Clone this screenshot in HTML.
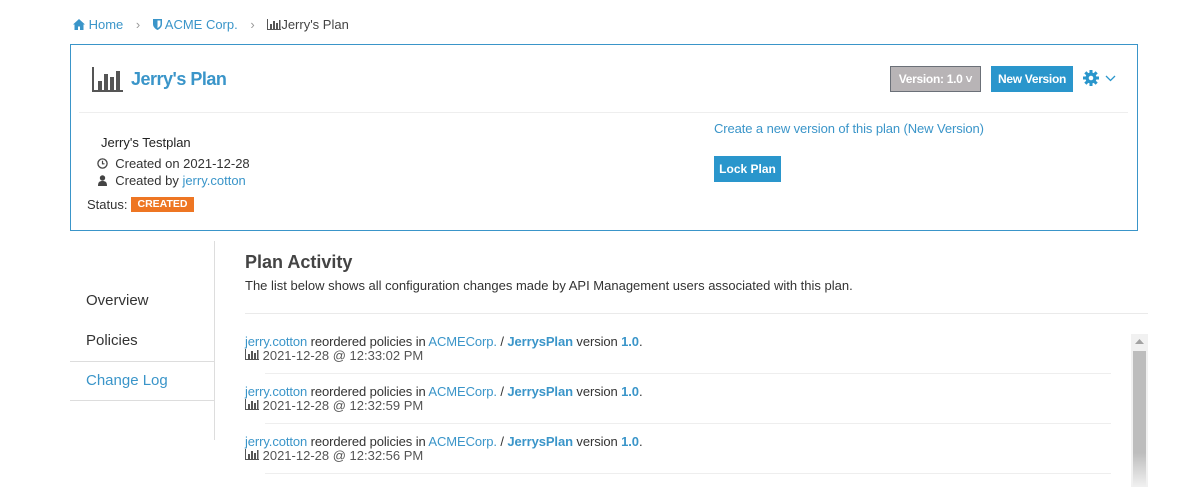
<!DOCTYPE html>
<html><head><meta charset="utf-8"><style>
*{box-sizing:border-box;margin:0;padding:0}
body{width:1183px;height:487px;overflow:hidden;background:#fff;font-family:"Liberation Sans",sans-serif;font-size:13px;color:#333;position:relative}
.a{position:absolute;white-space:nowrap}
.blue{color:#3a95c9}
.btn{position:absolute;color:#fff;font-weight:bold;font-size:12px;text-align:center}
.hr{position:absolute;height:1px;background:#e6e6e6}
</style></head><body>
<div class="a blue" style="left:73px;top:17px">
<svg width="12" height="11" viewBox="0 0 12 11" style="vertical-align:-1px"><path d="M6 0L0 5.5h1.5V11h3.5V7.5h2V11h3.5V5.5H12z" fill="#3a95c9"/></svg> Home
<span style="color:#999;margin:0 9px">›</span>
<svg width="9" height="11" viewBox="0 0 9 11" style="vertical-align:-1px"><path d="M0 0h9v5c0 3-2.5 5-4.5 6C2.5 10 0 8 0 5z" fill="#3a95c9"/><path d="M4.5 1.5h3v3.5c0 2-1.5 3.3-3 4z" fill="#fff"/></svg> ACME Corp.
<span style="color:#999;margin:0 9px">›</span>
<span style="color:#444"><svg width="14" height="11" viewBox="0 0 14 11" style="vertical-align:-1px"><path d="M0.5 0v10.5H14" stroke="#555" fill="none"/><rect x="3" y="5" width="2" height="5" fill="#555"/><rect x="6" y="2" width="2" height="8" fill="#555"/><rect x="9" y="4" width="2" height="6" fill="#555"/><rect x="12" y="1" width="1.5" height="9" fill="#555"/></svg>Jerry's Plan</span></div>

<div class="a" style="left:70px;top:44px;width:1068px;height:187px;border:1px solid #3a95c9"></div>
<svg class="a" style="left:92px;top:67px" width="31" height="25" viewBox="0 0 31 25"><path d="M1 0v24h30" stroke="#555" stroke-width="2" fill="none"/><rect x="6" y="14" width="4" height="9" fill="#555"/><rect x="12" y="7" width="4" height="16" fill="#555"/><rect x="18" y="10" width="4" height="13" fill="#555"/><rect x="24" y="4" width="4" height="19" fill="#555"/></svg>
<div class="a blue" style="left:131px;top:69px;font-size:18px;font-weight:bold;letter-spacing:-0.5px">Jerry's Plan</div>
<div class="btn" style="left:890px;top:66px;width:91px;height:26px;background:#b8b4b6;border:1px solid #6b7078;line-height:24px;letter-spacing:-0.3px">Version: 1.0 ˅</div>
<div class="btn" style="left:991px;top:66px;width:82px;height:26px;background:#2a96cc;line-height:26px;letter-spacing:-0.3px">New Version</div>
<svg class="a" style="left:1083px;top:70px" width="16" height="16" viewBox="0 0 16 16"><g fill="#2a96cc"><circle cx="8" cy="8" r="5.5"/><rect x="6.5" y="0" width="3" height="16"/><rect x="0" y="6.5" width="16" height="3"/><rect x="6.5" y="0" width="3" height="16" transform="rotate(45 8 8)"/><rect x="6.5" y="0" width="3" height="16" transform="rotate(-45 8 8)"/></g><circle cx="8" cy="8" r="2.3" fill="#fff"/></svg>
<svg class="a" style="left:1105px;top:75px" width="11" height="7" viewBox="0 0 11 7"><path d="M1 1l4.5 4.5L10 1" stroke="#2a96cc" stroke-width="1.3" fill="none"/></svg>
<div class="hr" style="left:79px;top:112px;width:1049px;background:#eee"></div>

<div class="a" style="left:101px;top:135px;color:#222">Jerry's Testplan</div>
<div class="a" style="left:97px;top:156px"><svg width="11" height="11" viewBox="0 0 11 11" style="vertical-align:-1px"><circle cx="5.5" cy="5.5" r="4.6" stroke="#444" stroke-width="1.3" fill="none"/><path d="M5.5 2.8v3h2" stroke="#444" stroke-width="1.2" fill="none"/></svg>&nbsp; Created on 2021-12-28</div>
<div class="a" style="left:97px;top:173px"><svg width="11" height="11" viewBox="0 0 11 11" style="vertical-align:-1px"><circle cx="5.5" cy="3" r="2.7" fill="#444"/><path d="M1 11c0-4 1.5-5 4.5-5s4.5 1 4.5 5z" fill="#444"/></svg>&nbsp; Created by <span class="blue">jerry.cotton</span></div>
<div class="a" style="left:87px;top:197px">Status:</div>
<div class="a" style="left:131px;top:197px;width:63px;height:15px;background:#ee7623;color:#fff;font-size:10.5px;font-weight:bold;text-align:center;line-height:15px">CREATED</div>

<div class="a blue" style="left:714px;top:121px;letter-spacing:-0.1px">Create a new version of this plan (New Version)</div>
<div class="btn" style="left:714px;top:156px;width:67px;height:26px;background:#2a96cc;line-height:26px">Lock Plan</div>

<div class="a" style="left:214px;top:241px;width:1px;height:199px;background:#ddd"></div>
<div class="a" style="left:86px;top:292px;font-size:15px;color:#333">Overview</div>
<div class="a" style="left:86px;top:332px;font-size:15px;color:#333">Policies</div>
<div class="hr" style="left:70px;top:361px;width:145px;background:#ddd"></div>
<div class="a blue" style="left:86px;top:372px;font-size:15px">Change Log</div>
<div class="hr" style="left:70px;top:400px;width:145px;background:#ddd"></div>

<div class="a" style="left:245px;top:252px;font-size:18px;font-weight:bold;color:#444">Plan Activity</div>
<div class="a" style="left:245px;top:278px;color:#333">The list below shows all configuration changes made by API Management users associated with this plan.</div>
<div class="hr" style="left:245px;top:313px;width:903px;background:#eaeaea"></div>

<div class="a" style="left:245px;top:334px;letter-spacing:-0.1px"><span class="blue">jerry.cotton</span> reordered policies in <span class="blue">ACMECorp.</span> / <b class="blue">JerrysPlan</b> version <b class="blue">1.0</b>.</div>
<div class="a" style="left:245px;top:348px;color:#555"><svg width="14" height="11" viewBox="0 0 14 11"><path d="M0.5 0v10.5H14" stroke="#555" fill="none"/><rect x="3" y="5" width="2" height="5" fill="#555"/><rect x="6" y="2" width="2" height="8" fill="#555"/><rect x="9" y="4" width="2" height="6" fill="#555"/><rect x="12" y="1" width="1.5" height="9" fill="#555"/></svg> 2021-12-28 @ 12:33:02 PM</div>
<div class="hr" style="left:265px;top:373px;width:846px;background:#eee"></div>
<div class="a" style="left:245px;top:384px;letter-spacing:-0.1px"><span class="blue">jerry.cotton</span> reordered policies in <span class="blue">ACMECorp.</span> / <b class="blue">JerrysPlan</b> version <b class="blue">1.0</b>.</div>
<div class="a" style="left:245px;top:398px;color:#555"><svg width="14" height="11" viewBox="0 0 14 11"><path d="M0.5 0v10.5H14" stroke="#555" fill="none"/><rect x="3" y="5" width="2" height="5" fill="#555"/><rect x="6" y="2" width="2" height="8" fill="#555"/><rect x="9" y="4" width="2" height="6" fill="#555"/><rect x="12" y="1" width="1.5" height="9" fill="#555"/></svg> 2021-12-28 @ 12:32:59 PM</div>
<div class="hr" style="left:265px;top:423px;width:846px;background:#eee"></div>
<div class="a" style="left:245px;top:434px;letter-spacing:-0.1px"><span class="blue">jerry.cotton</span> reordered policies in <span class="blue">ACMECorp.</span> / <b class="blue">JerrysPlan</b> version <b class="blue">1.0</b>.</div>
<div class="a" style="left:245px;top:448px;color:#555"><svg width="14" height="11" viewBox="0 0 14 11"><path d="M0.5 0v10.5H14" stroke="#555" fill="none"/><rect x="3" y="5" width="2" height="5" fill="#555"/><rect x="6" y="2" width="2" height="8" fill="#555"/><rect x="9" y="4" width="2" height="6" fill="#555"/><rect x="12" y="1" width="1.5" height="9" fill="#555"/></svg> 2021-12-28 @ 12:32:56 PM</div>
<div class="hr" style="left:265px;top:473px;width:846px;background:#eee"></div>

<div class="a" style="left:1131px;top:334px;width:17px;height:153px;background:#f1f1f1"></div>
<svg class="a" style="left:1135px;top:339px" width="9" height="6" viewBox="0 0 9 6"><path d="M4.5 0L9 5H0z" fill="#a3a3a3"/></svg>
<div class="a" style="left:1133px;top:351px;width:13px;height:136px;background:linear-gradient(#bdbdbd 0,#bdbdbd 75%,#f1f1f1 100%)"></div>
</body></html>
